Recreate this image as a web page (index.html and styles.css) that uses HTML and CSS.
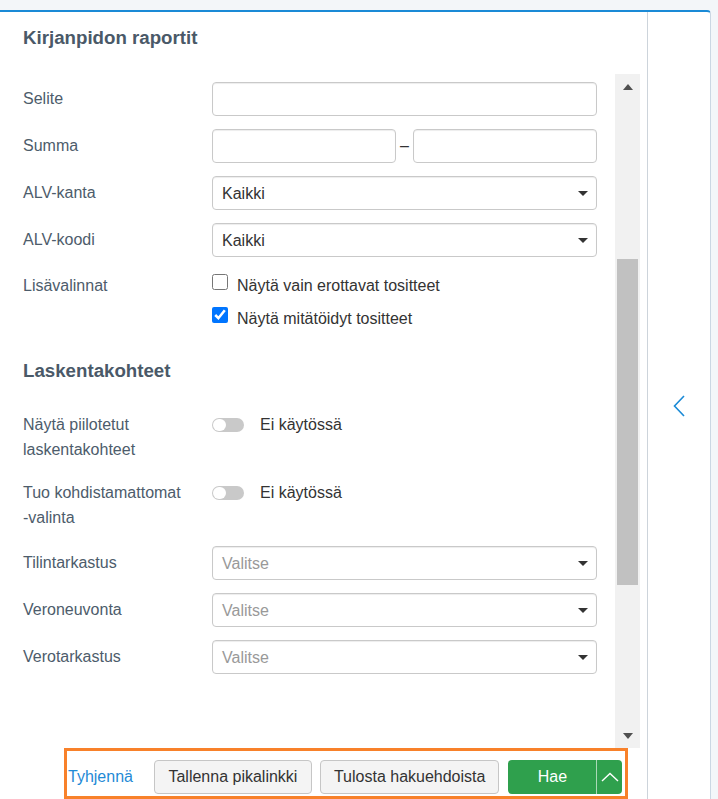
FILE: index.html
```html
<!DOCTYPE html>
<html lang="fi">
<head>
<meta charset="utf-8">
<title>Kirjanpidon raportit</title>
<link rel="stylesheet" href="styles.css">
</head>
<body>
<div class="panel">
  <div class="main">
    <h1 class="title">Kirjanpidon raportit</h1>
    <div class="scroll">
      <div class="content">
        <div class="row">
          <div class="label">Selite</div>
          <div class="ctrl"><input class="input" type="text"></div>
        </div>
        <div class="row">
          <div class="label">Summa</div>
          <div class="ctrl range">
            <input class="input half" type="text">
            <span class="dash">–</span>
            <input class="input half" type="text">
          </div>
        </div>
        <div class="row">
          <div class="label">ALV-kanta</div>
          <div class="ctrl"><div class="select"><span>Kaikki</span><span class="caret"></span></div></div>
        </div>
        <div class="row">
          <div class="label">ALV-koodi</div>
          <div class="ctrl"><div class="select"><span>Kaikki</span><span class="caret"></span></div></div>
        </div>
        <div class="row row-checks">
          <div class="label">Lisävalinnat</div>
          <div class="ctrl checks">
            <label class="check"><input type="checkbox"><span>Näytä vain erottavat tositteet</span></label>
            <label class="check"><input type="checkbox" checked><span>Näytä mitätöidyt tositteet</span></label>
          </div>
        </div>

        <h2 class="section">Laskentakohteet</h2>

        <div class="row row-toggle first">
          <div class="label">Näytä piilotetut<br>laskentakohteet</div>
          <div class="ctrl toggle-line"><span class="toggle"><span class="knob"></span></span><span class="toggle-text">Ei käytössä</span></div>
        </div>
        <div class="row row-toggle second">
          <div class="label">Tuo kohdistamattomat<br>-valinta</div>
          <div class="ctrl toggle-line"><span class="toggle"><span class="knob"></span></span><span class="toggle-text">Ei käytössä</span></div>
        </div>
        <div class="row">
          <div class="label">Tilintarkastus</div>
          <div class="ctrl"><div class="select"><span class="placeholder">Valitse</span><span class="caret"></span></div></div>
        </div>
        <div class="row">
          <div class="label">Veroneuvonta</div>
          <div class="ctrl"><div class="select"><span class="placeholder">Valitse</span><span class="caret"></span></div></div>
        </div>
        <div class="row">
          <div class="label">Verotarkastus</div>
          <div class="ctrl"><div class="select"><span class="placeholder">Valitse</span><span class="caret"></span></div></div>
        </div>
      </div>
      <div class="scrollbar">
        <div class="sb-btn"><span class="tri-up"></span></div>
        <div class="sb-track"><div class="sb-thumb"></div></div>
        <div class="sb-btn"><span class="tri-down"></span></div>
      </div>
    </div>
    <div class="bottom">
      <div class="actions">
        <a class="link" href="#">Tyhjennä</a>
        <button class="btn" type="button">Tallenna pikalinkki</button>
        <button class="btn btn-wide" type="button">Tulosta hakuehdoista</button>
        <div class="split">
          <button class="split-main" type="button">Hae</button>
          <button class="split-toggle" type="button" aria-label="Lisää">
            <svg width="18" height="10" viewBox="0 0 18 10"><polyline points="1,9 9,1.5 17,9" fill="none" stroke="#fff" stroke-width="1.4"/></svg>
          </button>
        </div>
      </div>
    </div>
  </div>
  <div class="side">
    <svg width="12" height="22" viewBox="0 0 12 22"><polyline points="11,1 1.5,11 11,21" fill="none" stroke="#1a8ad6" stroke-width="1.6"/></svg>
  </div>
</div>
</body>
</html>
```

FILE: styles.css
```css
* { box-sizing: border-box; }

html, body {
  margin: 0;
  height: 799px;
  overflow: hidden;
}

body {
  background: #f3f6f9;
  padding-top: 10px;
  font-family: "Liberation Sans", Arial, sans-serif;
  font-size: 16px;
  color: #333;
}

.panel {
  display: flex;
  width: 711px;
  height: 789px;
  background: #fff;
  border-top: 2px solid #1a8ad6;
  border-right: 1px solid #cbd7e3;
  border-top-right-radius: 4px;
  overflow: hidden;
}

.main {
  width: 648px;
  display: flex;
  flex-direction: column;
  border-right: 1px solid #cdd4db;
}

.side {
  flex: 1;
  display: flex;
  align-items: center;
  justify-content: center;
}

.title {
  margin: 0;
  padding: 14px 0 0 23px;
  font-size: 18.7px;
  line-height: 24px;
  font-weight: bold;
  color: #4a5968;
}

.scroll {
  margin-top: 24px;
  height: 674px;
  display: flex;
  flex: none;
}

.content {
  flex: 1;
  padding: 8px 18px 0 23px;
  overflow: hidden;
}

.row {
  display: grid;
  grid-template-columns: 189px 385px;
  margin-bottom: 13px;
}

.label {
  padding-top: 5px;
  line-height: 24px;
  color: #4d5c6b;
}

.ctrl {
  min-width: 0;
}

.input {
  display: block;
  width: 100%;
  height: 34px;
  margin: 0;
  border: 1px solid #c9c9c9;
  border-radius: 4px;
  box-shadow: inset 0 1px 1px rgba(0, 0, 0, 0.075);
  background: #fff;
  font: inherit;
  padding: 0 9px;
}

.range {
  display: flex;
  align-items: center;
}

.input.half {
  width: 184px;
  flex: none;
}

.dash {
  width: 17px;
  text-align: center;
  color: #333;
}

.select {
  display: flex;
  align-items: center;
  justify-content: space-between;
  height: 34px;
  border: 1px solid #c9c9c9;
  border-radius: 4px;
  box-shadow: inset 0 1px 1px rgba(0, 0, 0, 0.075);
  padding: 1px 8px 0 9px;
  color: #333;
}

.placeholder {
  color: #999;
}

.caret {
  width: 0;
  height: 0;
  border-left: 5px solid transparent;
  border-right: 5px solid transparent;
  border-top: 5px solid #333;
}

.row-checks {
  margin-bottom: 0;
}

.row-checks .label {
  padding-top: 4px;
}

.checks {
  padding-top: 4px;
  display: flex;
  flex-direction: column;
  gap: 9px;
}

.check {
  display: flex;
  align-items: flex-start;
  height: 24px;
  line-height: 24px;
  color: #333;
}

.check input {
  width: 16px;
  height: 16px;
  margin: 0 9px 0 0;
}

.section {
  margin: 28px 0 0;
  font-size: 18.7px;
  line-height: 24px;
  font-weight: bold;
  color: #4a5968;
}

.row-toggle .label {
  padding-top: 0;
  line-height: 24.5px;
}

.row-toggle.first {
  margin-top: 30px;
  margin-bottom: 19px;
}

.row-toggle.second {
  margin-bottom: 16px;
}

.toggle-line {
  display: flex;
  align-items: center;
  height: 24px;
}

.toggle {
  display: flex;
  align-items: center;
  width: 32px;
  height: 14px;
  border-radius: 7px;
  background: #c9c9c9;
  padding: 1px;
}

.knob {
  width: 13px;
  height: 12px;
  border-radius: 6px;
  background: #fff;
}

.toggle-text {
  margin-left: 16px;
  color: #333;
}

.scrollbar {
  width: 25px;
  margin-right: 7px;
  background: #f1f1f1;
  display: flex;
  flex-direction: column;
}

.sb-btn {
  height: 25px;
  display: flex;
  align-items: center;
  justify-content: center;
}

.tri-up,
.tri-down {
  width: 0;
  height: 0;
  border-left: 5px solid transparent;
  border-right: 5px solid transparent;
}

.tri-up { border-bottom: 6px solid #505050; }
.tri-down { border-top: 6px solid #505050; }

.sb-track {
  flex: 1;
  padding: 0 2px;
}

.sb-thumb {
  margin-top: 160px;
  height: 326px;
  background: #c1c1c1;
}

.bottom {
  flex: 1;
}

.actions {
  display: flex;
  align-items: flex-start;
  margin-left: 64px;
  width: 564px;
  height: 51px;
  border: 3px solid #f8812a;
  padding: 9px 0 0 1px;
}

.link {
  line-height: 34px;
  color: #1f8ad6;
  text-decoration: none;
  margin-right: 21px;
}

.btn {
  height: 34px;
  margin: 0 8px 0 0;
  padding: 0 13.5px;
  border: 1px solid #c6c6c6;
  border-radius: 4px;
  background: #f4f4f4;
  color: #333;
  font: inherit;
}

.btn-wide {
  padding: 0 13px;
  margin-right: 9px;
}

.split {
  display: flex;
  height: 34px;
  border-radius: 4px;
  overflow: hidden;
  background: #2fa04d;
}

.split-main {
  width: 88px;
  height: 34px;
  border: 0;
  background: transparent;
  color: #fff;
  font: inherit;
  padding: 0;
}

.split-toggle {
  width: 26px;
  height: 34px;
  border: 0;
  border-left: 1px solid rgba(255, 255, 255, 0.6);
  background: transparent;
  padding: 0;
  display: flex;
  align-items: center;
  justify-content: center;
}
```
